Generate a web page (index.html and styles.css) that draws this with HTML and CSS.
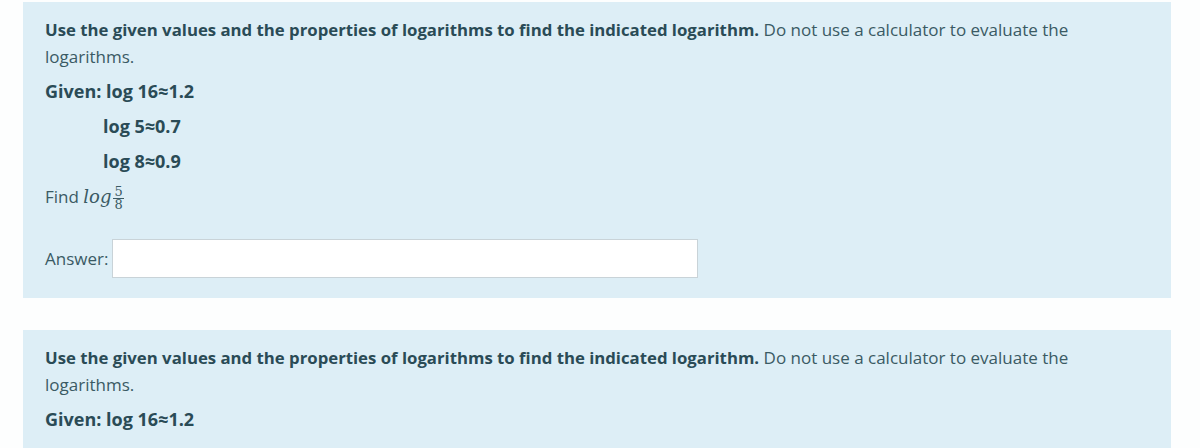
FILE: index.html
```html
<!DOCTYPE html>
<html lang="en">
<head>
<meta charset="utf-8">
<title>Logarithm questions</title>
<link rel="stylesheet" href="styles.css">
</head>
<body>
<main class="page">
  <section class="question">
    <p class="prompt"><strong>Use the given values and the properties of logarithms to find the indicated logarithm.</strong> Do not use a calculator to evaluate the logarithms.</p>
    <div class="given">
      <div class="given-row"><strong>Given: log 16≈1.2</strong></div>
      <div class="given-row indent"><strong>log 5≈0.7</strong></div>
      <div class="given-row indent"><strong>log 8≈0.9</strong></div>
    </div>
    <p class="find">Find <span class="math"><i>log</i><span class="frac"><span class="num">5</span><span class="den">8</span></span></span></p>
    <div class="answer">
      <label class="answer-label" for="a1">Answer:</label>
      <input class="answer-input" id="a1" type="text">
    </div>
  </section>
  <section class="question">
    <p class="prompt"><strong>Use the given values and the properties of logarithms to find the indicated logarithm.</strong> Do not use a calculator to evaluate the logarithms.</p>
    <div class="given">
      <div class="given-row"><strong>Given: log 16≈1.2</strong></div>
    </div>
  </section>
</main>
</body>
</html>
```
FILE: styles.css
```css
* { box-sizing: border-box; }
html, body { margin: 0; padding: 0; background: #fdfefe; }
body {
  font-family: "Open Sans", "Noto Sans", sans-serif;
  font-size: 17px;
  color: #3a5a64;
}
.page {
  padding: 2px 29px 0 23px;
  display: flex;
  flex-direction: column;
  gap: 32px;
}
.question {
  background: #ddeef6;
  padding: 14px 22px 20px 22px;
}
.prompt {
  margin: 0;
  line-height: 27px;
}
.prompt strong { color: #2a4b56; font-weight: 700; font-size: 16.75px; }
.given-row strong { color: #2a4b56; font-weight: 700; }
.given {
  margin-top: 8px;
  display: flex;
  flex-direction: column;
  gap: 8px;
}
.given-row { line-height: 27px; font-size: 18px; }
.indent { padding-left: 58px; }
.find {
  margin: 8px 0 0 0;
  line-height: 27px;
}
.math {
  font-family: "DejaVu Serif", "Liberation Serif", serif;
  font-size: 18px;
}
.math i { font-style: italic; }
.frac {
  display: inline-flex;
  flex-direction: column;
  align-items: center;
  vertical-align: 7px;
  font-size: 13px;
  line-height: 10px;
  margin-left: 2px;
}
.frac .num { border-bottom: 1px solid #3a5a64; padding: 0 1px 1px; }
.frac .den { padding-top: 1px; }
.answer {
  margin-top: 29px;
  display: flex;
  align-items: center;
  gap: 4px;
}
.answer-label { line-height: 27px; }
.answer-input {
  width: 586px;
  height: 39px;
  border: 1px solid #c9d3d8;
  background: #fff;
  margin: 0;
  padding: 0 6px;
}
```
